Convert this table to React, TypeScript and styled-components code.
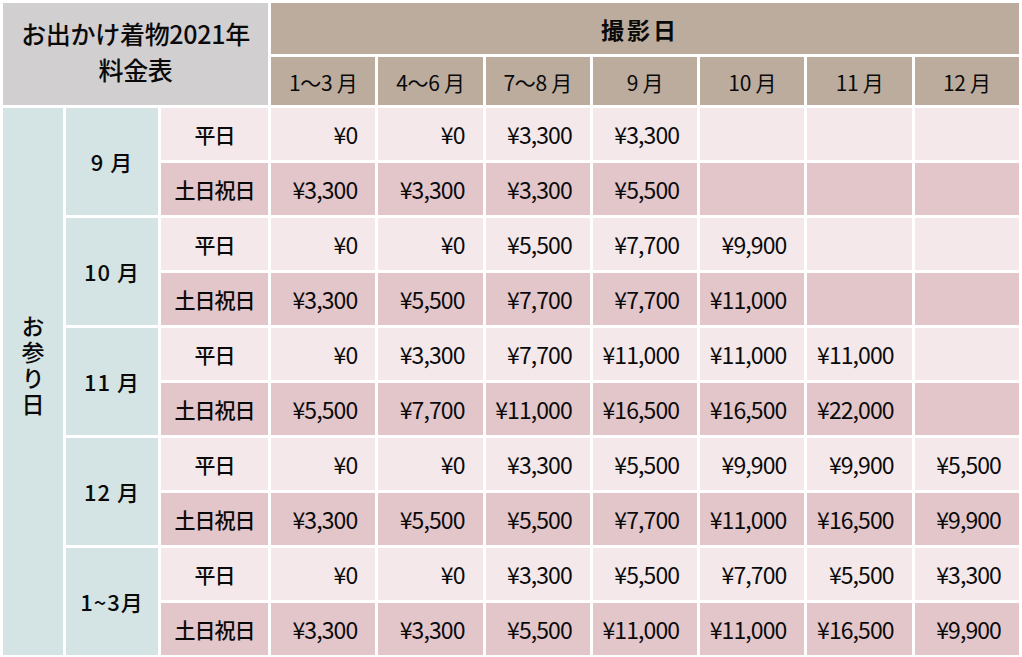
import * as React from 'react';
import styled, { createGlobalStyle } from 'styled-components';

const GlobalStyle = createGlobalStyle`
  html, body {
    margin: 0;
    padding: 0;
    background: #ffffff;
  }
  body {
    font-family: "Noto Sans CJK JP", "Noto Sans", sans-serif;
    -webkit-font-smoothing: antialiased;
  }
`

const Table = styled.div`
  display: grid;
  grid-template-columns: 60px 92px 107px repeat(7, 1fr);
  grid-template-rows: 51px 48px repeat(10, 52px);
  gap: 3px;
  padding: 3px;
  width: 1022px;
  height: 657px;
  box-sizing: border-box;
  background: #ffffff;
  overflow: hidden;
  color: #0a0a0a;
`

const Corner = styled.div`
  grid-column: span 3;
  grid-row: span 2;
  background: #d1cfd0;
  display: flex;
  flex-direction: column;
  align-items: center;
  justify-content: center;
  font-size: 25px;
  font-weight: 500;
  line-height: 36px;
  letter-spacing: -0.3px;
  padding-bottom: 6px;
`

const ShootHeader = styled.div`
  grid-column: span 7;
  background: #bcac9e;
  display: flex;
  align-items: center;
  justify-content: center;
  font-size: 23px;
  font-weight: 700;
  letter-spacing: 3px;
  padding-right: 10px;
`

const MonthHead = styled.div`
  background: #bcac9e;
  display: flex;
  align-items: center;
  justify-content: center;
  font-size: 21px;
  font-weight: 400;
  letter-spacing: -0.3px;
  white-space: pre;
  padding-top: 2px;
`

const SideLabel = styled.div`
  grid-row: span 10;
  background: #d4e3e3;
  display: flex;
  align-items: center;
  justify-content: center;
  writing-mode: vertical-rl;
  text-orientation: upright;
  font-size: 23px;
  font-weight: 500;
  letter-spacing: 3px;
  padding-bottom: 30px;
`

const MonthCell = styled.div`
  grid-row: span 2;
  background: #d4e3e3;
  display: flex;
  align-items: center;
  justify-content: center;
  font-size: 22px;
  font-weight: 500;
  letter-spacing: 1px;
  white-space: pre;
  padding-bottom: 2px;
`

const DayType = styled.div<{ $holiday?: boolean }>`
  background: ${p => (p.$holiday ? '#e3c6ca' : '#f4e8ea')};
  display: flex;
  align-items: center;
  justify-content: center;
  font-size: 21px;
  font-weight: 500;
  letter-spacing: -1px;
`

const Price = styled.div<{ $holiday?: boolean }>`
  background: ${p => (p.$holiday ? '#e3c6ca' : '#f4e8ea')};
  display: flex;
  align-items: center;
  justify-content: flex-end;
  padding-right: 18px;
  font-size: 23px;
  font-weight: 400;
  letter-spacing: -0.9px;
`

const columns = ['1～3 月', '4～6 月', '7～8 月', '9 月', '10 月', '11 月', '12 月']

const rows = [
  {
    month: '9 月',
    weekday: ['¥0', '¥0', '¥3,300', '¥3,300', '', '', ''],
    holiday: ['¥3,300', '¥3,300', '¥3,300', '¥5,500', '', '', ''],
  },
  {
    month: '10 月',
    weekday: ['¥0', '¥0', '¥5,500', '¥7,700', '¥9,900', '', ''],
    holiday: ['¥3,300', '¥5,500', '¥7,700', '¥7,700', '¥11,000', '', ''],
  },
  {
    month: '11 月',
    weekday: ['¥0', '¥3,300', '¥7,700', '¥11,000', '¥11,000', '¥11,000', ''],
    holiday: ['¥5,500', '¥7,700', '¥11,000', '¥16,500', '¥16,500', '¥22,000', ''],
  },
  {
    month: '12 月',
    weekday: ['¥0', '¥0', '¥3,300', '¥5,500', '¥9,900', '¥9,900', '¥5,500'],
    holiday: ['¥3,300', '¥5,500', '¥5,500', '¥7,700', '¥11,000', '¥16,500', '¥9,900'],
  },
  {
    month: '1~3月',
    weekday: ['¥0', '¥0', '¥3,300', '¥5,500', '¥7,700', '¥5,500', '¥3,300'],
    holiday: ['¥3,300', '¥3,300', '¥5,500', '¥11,000', '¥11,000', '¥16,500', '¥9,900'],
  },
]

const App = () => {
  return (
    <>
      <GlobalStyle />
      <Table>
        <Corner>
          <div>お出かけ着物2021年</div>
          <div>料金表</div>
        </Corner>
        <ShootHeader>撮影日</ShootHeader>
        {columns.map(c => (
          <MonthHead key={c}>{c}</MonthHead>
        ))}
        <SideLabel>お参り日</SideLabel>
        {rows.map(r => (
          <React.Fragment key={r.month}>
            <MonthCell>{r.month}</MonthCell>
            <DayType>平日</DayType>
            {r.weekday.map((v, i) => (
              <Price key={'w' + i}>{v}</Price>
            ))}
            <DayType $holiday>土日祝日</DayType>
            {r.holiday.map((v, i) => (
              <Price key={'h' + i} $holiday>{v}</Price>
            ))}
          </React.Fragment>
        ))}
      </Table>
    </>
  );
}

export default App;
